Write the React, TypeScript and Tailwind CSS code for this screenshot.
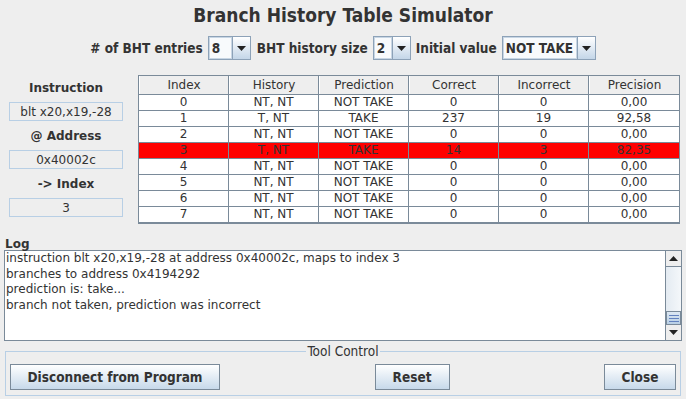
import React from "react";

const rows = [
  ["0", "NT, NT", "NOT TAKE", "0", "0", "0,00"],
  ["1", "T, NT", "TAKE", "237", "19", "92,58"],
  ["2", "NT, NT", "NOT TAKE", "0", "0", "0,00"],
  ["3", "T, NT", "TAKE", "14", "3", "82,35"],
  ["4", "NT, NT", "NOT TAKE", "0", "0", "0,00"],
  ["5", "NT, NT", "NOT TAKE", "0", "0", "0,00"],
  ["6", "NT, NT", "NOT TAKE", "0", "0", "0,00"],
  ["7", "NT, NT", "NOT TAKE", "0", "0", "0,00"],
];

const headers = ["Index", "History", "Prediction", "Correct", "Incorrect", "Precision"];

const cond = "font-['DejaVu_Sans_Condensed','DejaVu_Sans',sans-serif] font-stretch-condensed";

function Arrow({ up = false }: { up?: boolean }) {
  return (
    <svg width="9" height="5" viewBox="0 0 9 5">
      {up ? <polygon points="0,5 9,5 4.5,0" fill="#222" /> : <polygon points="0,0 9,0 4.5,5" fill="#222" />}
    </svg>
  );
}

function Combo({ value, w }: { value: string; w: string }) {
  return (
    <div className="flex h-[24px] border border-[#8da2b8]">
      <div className={`${w} flex items-center pl-[2px] bg-[#f8fafc] border border-[#c8d6e4]`}>{value}</div>
      <div className="w-[18px] flex items-center justify-center border-l border-[#8da2b8] bg-gradient-to-b from-white to-[#c4d6e8]">
        <Arrow />
      </div>
    </div>
  );
}

function InfoBox({ text }: { text: string }) {
  return (
    <div className="h-[19px] border border-[#b8cfe5] flex items-center justify-center text-[12px]">{text}</div>
  );
}

function Button({ label, w }: { label: string; w: string }) {
  return (
    <button className={`${w} h-[26px] border border-[#7a8a99] bg-gradient-to-b from-white to-[#c7d9ea] text-[13.5px] font-bold text-[#333333]`}>
      {label}
    </button>
  );
}

export default function App() {
  return (
    <div className="w-[686px] h-[399px] overflow-hidden bg-[#eeeeee] text-[#333333] font-['DejaVu_Sans',sans-serif] text-[12px]">
      <div className={`h-[30px] flex items-center justify-center text-[19px] font-bold ${cond}`}>
        Branch History Table Simulator
      </div>

      <div className={`mt-[6px] h-[24px] flex items-center justify-center gap-[5px] text-[13.5px] font-bold ${cond}`}>
        <span># of BHT entries</span>
        <Combo value="8" w="w-[23px]" />
        <span className="ml-[1px]">BHT history size</span>
        <Combo value="2" w="w-[18px]" />
        <span>Initial value</span>
        <Combo value="NOT TAKE" w="w-[74px]" />
      </div>

      <div className="mt-[13px] flex">
        <div className="w-[138px] pl-[9px]">
          <div className="w-[114px] flex flex-col">
            <div className="h-[29px] flex items-center justify-center font-bold">Instruction</div>
            <InfoBox text="blt x20,x19,-28" />
            <div className="h-[29px] flex items-center justify-center font-bold">@ Address</div>
            <InfoBox text="0x40002c" />
            <div className="h-[29px] flex items-center justify-center font-bold">-&gt; Index</div>
            <InfoBox text="3" />
          </div>
        </div>

        <div className="mt-[2px] w-[542px] border border-[#7a8a99] bg-white">
          <div className="grid grid-cols-6 h-[19px] bg-[#eeeeee] border-b border-[#7a8a99]">
            {headers.map((h, i) => (
              <div
                key={h}
                className={`flex items-center justify-center border-l border-white ${i < 5 ? "border-r border-r-[#7a8a99]" : ""}`}
              >
                {h}
              </div>
            ))}
          </div>
          {rows.map((r, ri) => (
            <div
              key={ri}
              className={`grid grid-cols-6 h-[16px] border-b border-[#7a8a99] ${ri === 3 ? "bg-[#ff0000]" : "bg-white"}`}
            >
              {r.map((c, ci) => (
                <div
                  key={ci}
                  className={`flex items-center justify-center leading-[15px] ${ci < 5 ? "border-r border-[#7a8a99]" : ""}`}
                >
                  {c}
                </div>
              ))}
            </div>
          ))}
        </div>
      </div>

      <div className="mt-[15px] h-[11px] leading-[11px] pl-[5px] font-bold">Log</div>
      <div className="ml-[4px] w-[678px] h-[91px] border border-[#7a8a99] bg-white flex">
        <div className="flex-1 pl-[1px] leading-[15.5px]">
          <div>instruction blt x20,x19,-28 at address 0x40002c, maps to index 3</div>
          <div>branches to address 0x4194292</div>
          <div>prediction is: take...</div>
          <div>branch not taken, prediction was incorrect</div>
        </div>
        <div className="w-[16px] flex flex-col border-l border-[#7a8a99] bg-[#eeeeee]">
          <div className="h-[16px] flex items-center justify-center border-b border-[#7a8a99] bg-[#eeeeee]">
            <Arrow up />
          </div>
          <div className="flex-1 flex flex-col justify-end bg-gradient-to-r from-[#e4ebf2] to-[#f4f7fa]">
            <div className="h-[14px] border border-[#7a8a99] bg-gradient-to-b from-[#dde8f3] to-[#b8cfe5] flex flex-col items-center justify-center gap-[2px]">
              <div className="w-[10px] h-[1px] bg-[#6382bf]" />
              <div className="w-[10px] h-[1px] bg-[#6382bf]" />
              <div className="w-[10px] h-[1px] bg-[#6382bf]" />
            </div>
          </div>
          <div className="h-[15px] flex items-center justify-center bg-[#eeeeee]">
            <Arrow />
          </div>
        </div>
      </div>

      <fieldset className={`mt-[3px] mx-[5px] w-[676px] border border-[#b8cfe5] px-[4px] pb-[5px] ${cond}`}>
        <legend className="mx-auto px-[1px] text-[13.5px] leading-[14px] font-medium">Tool Control</legend>
        <div className="mt-[6px] flex justify-between">
          <Button label="Disconnect from Program" w="w-[210px]" />
          <Button label="Reset" w="w-[75px]" />
          <Button label="Close" w="w-[72px]" />
        </div>
      </fieldset>
    </div>
  );
}
